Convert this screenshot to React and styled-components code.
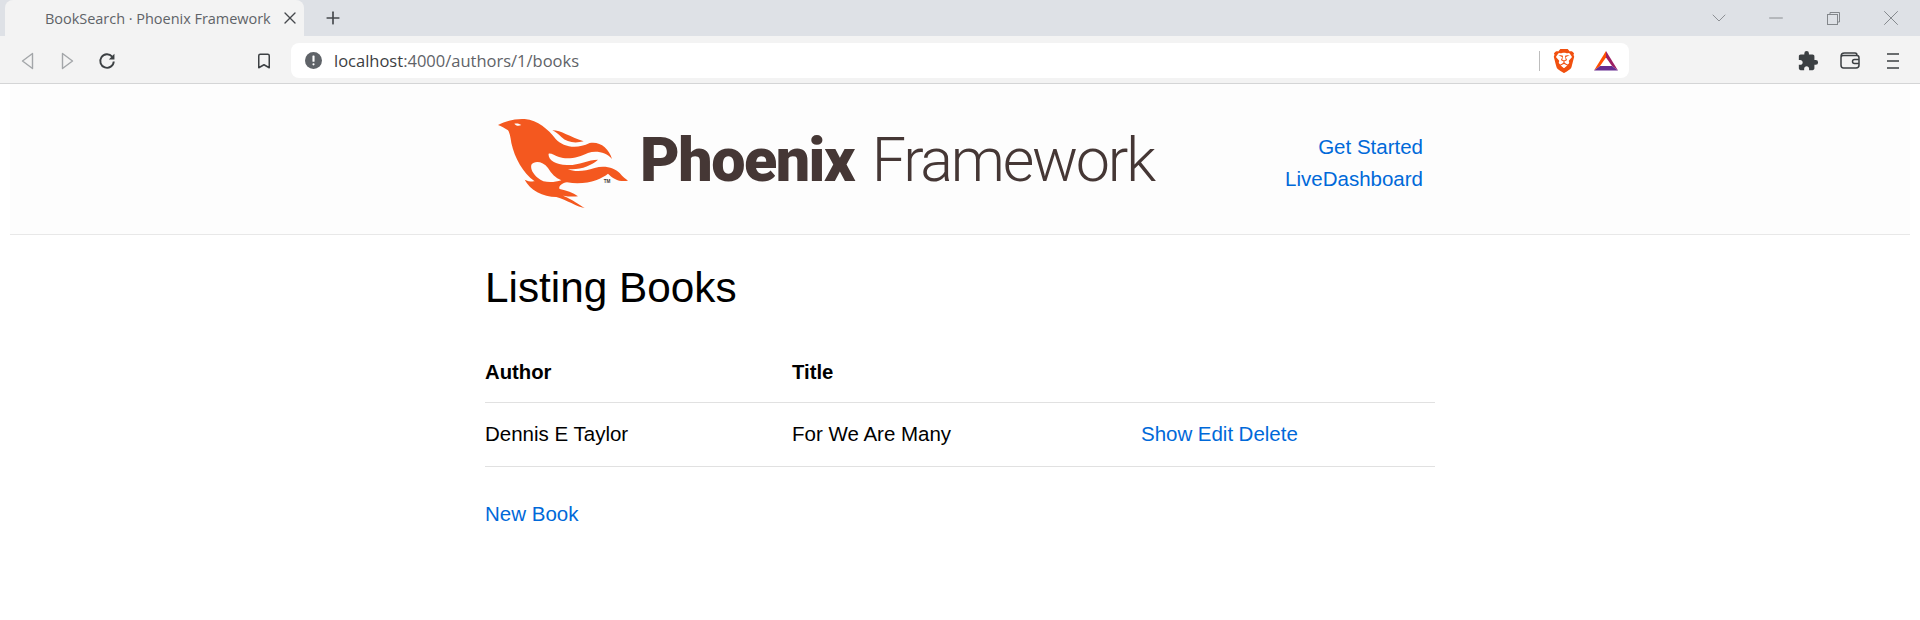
import React from "react";
import styled, { createGlobalStyle } from "styled-components";
import { MdExtension } from "react-icons/md";
import { SiBrave } from "react-icons/si";
import { Bookmark, Plus, X, ChevronDown, Minus } from "lucide-react";

const GlobalStyle = createGlobalStyle`
  html, body {
    margin: 0;
    padding: 0;
    background: #fff;
    font-family: "Liberation Sans", Arial, sans-serif;
    color: #000;
  }
`;

const TabStrip = styled.div`
  display: flex;
  align-items: flex-end;
  height: 36px;
  background: #dee1e6;
  padding-left: 5px;
`;
const Tab = styled.div`
  display: flex;
  align-items: center;
  width: 299px;
  height: 36px;
  box-sizing: border-box;
  padding-left: 40px;
  background: #f3f3f3;
  border-radius: 8px 8px 0 0;
  font: 14.5px "Open Sans", sans-serif;
  letter-spacing: -0.03px;
  color: #5f6368;
`;
const TabTitle = styled.span`
  flex: 1;
  white-space: nowrap;
`;
const TabClose = styled.span`
  display: flex;
  margin-right: 4px;
  color: #45484c;
`;
const NewTab = styled.span`
  display: flex;
  align-items: center;
  margin-left: 19px;
  height: 36px;
  color: #45484c;
`;
const WindowControls = styled.div`
  display: flex;
  margin-left: auto;
  height: 36px;
`;
const WindowButton = styled.span`
  display: flex;
  align-items: center;
  justify-content: center;
  width: ${(p) => p.$width || 58}px;
  color: #83878b;
`;

const Toolbar = styled.div`
  display: flex;
  align-items: center;
  height: 48px;
  box-sizing: border-box;
  background: #f3f3f3;
  border-bottom: 1px solid #d4d5d6;
  padding: 2px 0 0 7px;
`;
const ToolButton = styled.span`
  display: flex;
  align-items: center;
  justify-content: center;
  width: 40px;
  height: 35px;
  flex: none;
  margin-left: ${(p) => p.$gap || 0}px;
  color: #3c4043;
`;
const AddressBar = styled.div`
  display: flex;
  align-items: center;
  flex: none;
  width: 1338px;
  height: 35px;
  box-sizing: border-box;
  margin-left: 7px;
  padding-left: 14px;
  background: #fff;
  border-radius: 8px;
`;
const Url = styled.div`
  flex: 1;
  margin-left: 12px;
  font: 16.5px "Open Sans", sans-serif;
  color: #5f6368;
`;
const UrlHost = styled.span`
  color: #3c4043;
`;
const Divider = styled.span`
  width: 1px;
  height: 20px;
  background: #bdbdbd;
`;
const Shields = styled.span`
  display: flex;
  margin-left: 12px;
  color: #f1500f;
`;
const Rewards = styled.span`
  display: flex;
  margin-left: 18px;
  margin-right: 11px;
`;
const ToolIcons = styled.div`
  display: flex;
  margin-left: 157px;
`;
const ToolSlot = styled.span`
  display: flex;
  align-items: center;
  justify-content: center;
  width: ${(p) => p.$width}px;
  color: #3c4043;
`;

const Header = styled.header`
  margin: 0 10px;
  height: 150px;
  background: #fdfdfd;
  border-bottom: 1px solid #e8e8e8;
`;
const HeaderInner = styled.div`
  display: flex;
  justify-content: space-between;
  width: 930px;
  height: 100%;
  margin-left: 483px;
`;
const LogoWrap = styled.div`
  display: flex;
  align-items: flex-start;
  padding-top: 29px;
`;
const LogoWords = styled.div`
  display: flex;
  align-items: baseline;
  margin: 12px 0 0 7px;
  color: #453735;
  font-family: "Roboto", sans-serif;
  font-size: 61px;
  line-height: 70px;
  white-space: nowrap;
`;
const LogoBold = styled.span`
  font-weight: 900;
  letter-spacing: -1.5px;
`;
const LogoLight = styled.span`
  margin-left: 18px;
  font-weight: 300;
  letter-spacing: -2.2px;
`;
const Nav = styled.nav`
  display: flex;
  flex-direction: column;
  align-items: flex-end;
  gap: 7px;
  padding-top: 50px;
`;
const Link = styled.a`
  font-size: 20.5px;
  line-height: 25px;
  color: #0069d9;
  text-decoration: none;
`;

const Main = styled.main`
  width: 950px;
  margin-left: 485px;
`;
const Title = styled.h1`
  margin: 27px 0 0;
  font-size: 42.3px;
  font-weight: 400;
  line-height: 52px;
`;
const Table = styled.table`
  width: 950px;
  margin-top: 40px;
  border-collapse: collapse;
  table-layout: fixed;
  font-size: 20.5px;
  line-height: 25px;
`;
const Th = styled.th`
  height: 48px;
  padding: 0 0 10px;
  text-align: left;
  font-size: 20.3px;
  box-sizing: border-box;
  border-bottom: 1px solid #e1e1e1;
  width: ${(p) => p.$width}px;
`;
const Td = styled.td`
  height: 64px;
  box-sizing: border-box;
  padding: 0 0 1px;
  border-bottom: 1px solid #e1e1e1;
`;
const Actions = styled.span`
  display: flex;
  gap: 5.5px;
`;
const Footer = styled.div`
  margin-top: 34px;
`;

function FlameLogo() {
  return (
    <svg width="140" height="100" viewBox="40 40 420 300" fill="#f4581f">
      <path d="M55 76C75 66 105 56 135 58C175 62 205 88 228 118C250 142 290 150 330 130C360 124 388 145 397 178C380 158 350 152 325 160C300 172 265 182 238 172C226 168 214 160 207 162C204 178 225 195 262 196C295 198 325 180 355 180C335 198 300 212 265 208C285 218 315 215 345 205C375 195 405 205 420 220C430 232 438 238 445 243C420 248 400 238 385 222C365 238 320 258 262 248C245 250 235 262 240 268C260 272 280 278 295 290C280 292 262 290 250 288C280 300 298 315 315 325C290 322 262 300 230 292C190 292 150 270 135 240C145 245 155 246 165 245C130 220 105 175 95 130C92 110 90 100 85 92C75 85 65 80 55 76Z" />
      <path d="M155 195C165 182 190 185 205 205C215 222 228 235 245 242C220 250 190 250 175 235C160 222 152 208 155 195Z" fill="#fdfdfd" />
      <path d="M218 92C245 92 270 112 312 125C285 132 262 128 245 112C235 102 228 97 218 92Z" />
      <path d="M104 72C112 70 120 72 125 76C116 80 108 78 104 72Z" fill="#fdfdfd" />
      <text x="372" y="251" fontSize="14" fontFamily="Liberation Sans" fontWeight="700" fill="#453735">TM</text>
    </svg>
  );
}

function BackArrow({ flip }) {
  return (
    <svg width="13" height="18" viewBox="0 0 13 18" fill="none" stroke="#a3a6a9" strokeWidth="1.4">
      <path d={flip ? "M1.5 1.5L11.5 9L1.5 16.5Z" : "M11.5 1.5L1.5 9L11.5 16.5Z"} strokeLinejoin="round" />
    </svg>
  );
}

function Reload() {
  return (
    <svg width="18" height="18" viewBox="0 0 16 16" fill="none">
      <path d="M12.6 4.2A6 6 0 1 0 14 8.4" stroke="#3c4043" strokeWidth="1.7" />
      <path d="M14.6 1.6V6.6H9.6Z" fill="#3c4043" />
    </svg>
  );
}

function Insecure() {
  return (
    <svg width="17" height="17" viewBox="0 0 16 16">
      <circle cx="8" cy="8" r="8" fill="#5f6368" />
      <rect x="7" y="3.2" width="2" height="6" rx="0.6" fill="#fff" />
      <rect x="7" y="10.6" width="2" height="2" rx="1" fill="#fff" />
    </svg>
  );
}

function RewardsIcon() {
  return (
    <svg width="24" height="20" viewBox="0 0 24 20">
      <path d="M12 0L0 19.5L6 15L12 6.5Z" fill="#ff5000" />
      <path d="M12 0L24 19.5L18 15L12 6.5Z" fill="#9e1f63" />
      <path d="M0 19.5H24L18 15H6Z" fill="#662d91" />
    </svg>
  );
}

function Restore() {
  return (
    <svg width="13" height="13" viewBox="0 0 13 13" fill="none" stroke="#83878b">
      <rect x="0.5" y="2.5" width="10" height="10" />
      <path d="M3 2.5V0.5H12.5V10H10.5" />
    </svg>
  );
}

function Wallet() {
  return (
    <svg width="20" height="17" viewBox="0 0 20 17" fill="none" stroke="#3c4043" strokeWidth="1.5">
      <path d="M1 4.5C1 2 2.5 1 4.5 1H15C16.5 1 17 2 17 3.5H3.5C2 3.5 1 4 1 5.5V13C1 15 2 16 3.5 16H16C18 16 19 15 19 13V6C19 4.5 18 3.5 17 3.5" />
      <path d="M19 7.5H14.5C13 7.5 12.5 8.5 12.5 9.5C12.5 10.5 13 11.5 14.5 11.5H19" />
    </svg>
  );
}

function MenuIcon() {
  return (
    <svg width="12" height="16" viewBox="0 0 12 16" stroke="#3c4043" strokeWidth="1.6">
      <path d="M0 1H12M0 8H12M0 15H12" />
    </svg>
  );
}

export default function App() {
  return (
    <>
      <GlobalStyle />
      <TabStrip>
        <Tab>
          <TabTitle>BookSearch · Phoenix Framework</TabTitle>
          <TabClose>
            <X size={20} strokeWidth={1.6} />
          </TabClose>
        </Tab>
        <NewTab>
          <Plus size={20} strokeWidth={2} />
        </NewTab>
        <WindowControls>
          <WindowButton>
            <ChevronDown size={24} strokeWidth={0.9} />
          </WindowButton>
          <WindowButton $width={56}>
            <Minus size={22} strokeWidth={1} />
          </WindowButton>
          <WindowButton>
            <Restore />
          </WindowButton>
          <WindowButton>
            <X size={26} strokeWidth={0.9} />
          </WindowButton>
        </WindowControls>
      </TabStrip>
      <Toolbar>
        <ToolButton>
          <BackArrow />
        </ToolButton>
        <ToolButton>
          <BackArrow flip />
        </ToolButton>
        <ToolButton>
          <Reload />
        </ToolButton>
        <ToolButton $gap={117}>
          <Bookmark size={18} strokeWidth={2} />
        </ToolButton>
        <AddressBar>
          <Insecure />
          <Url>
            <UrlHost>localhost</UrlHost>:4000/authors/1/books
          </Url>
          <Divider />
          <Shields>
            <SiBrave size={24} />
          </Shields>
          <Rewards>
            <RewardsIcon />
          </Rewards>
        </AddressBar>
        <ToolIcons>
          <ToolSlot $width={44}>
            <MdExtension size={22} />
          </ToolSlot>
          <ToolSlot $width={40}>
            <Wallet />
          </ToolSlot>
          <ToolSlot $width={46}>
            <MenuIcon />
          </ToolSlot>
        </ToolIcons>
      </Toolbar>
      <Header>
        <HeaderInner>
          <LogoWrap>
            <FlameLogo />
            <LogoWords>
              <LogoBold>Phoenix</LogoBold>
              <LogoLight>Framework</LogoLight>
            </LogoWords>
          </LogoWrap>
          <Nav>
            <Link href="#">Get Started</Link>
            <Link href="#">LiveDashboard</Link>
          </Nav>
        </HeaderInner>
      </Header>
      <Main>
        <Title>Listing Books</Title>
        <Table>
          <thead>
            <tr>
              <Th $width={307}>Author</Th>
              <Th $width={349}>Title</Th>
              <Th />
            </tr>
          </thead>
          <tbody>
            <tr>
              <Td>Dennis E Taylor</Td>
              <Td>For We Are Many</Td>
              <Td>
                <Actions>
                  <Link href="#">Show</Link>
                  <Link href="#">Edit</Link>
                  <Link href="#">Delete</Link>
                </Actions>
              </Td>
            </tr>
          </tbody>
        </Table>
        <Footer>
          <Link href="#">New Book</Link>
        </Footer>
      </Main>
    </>
  );
}
